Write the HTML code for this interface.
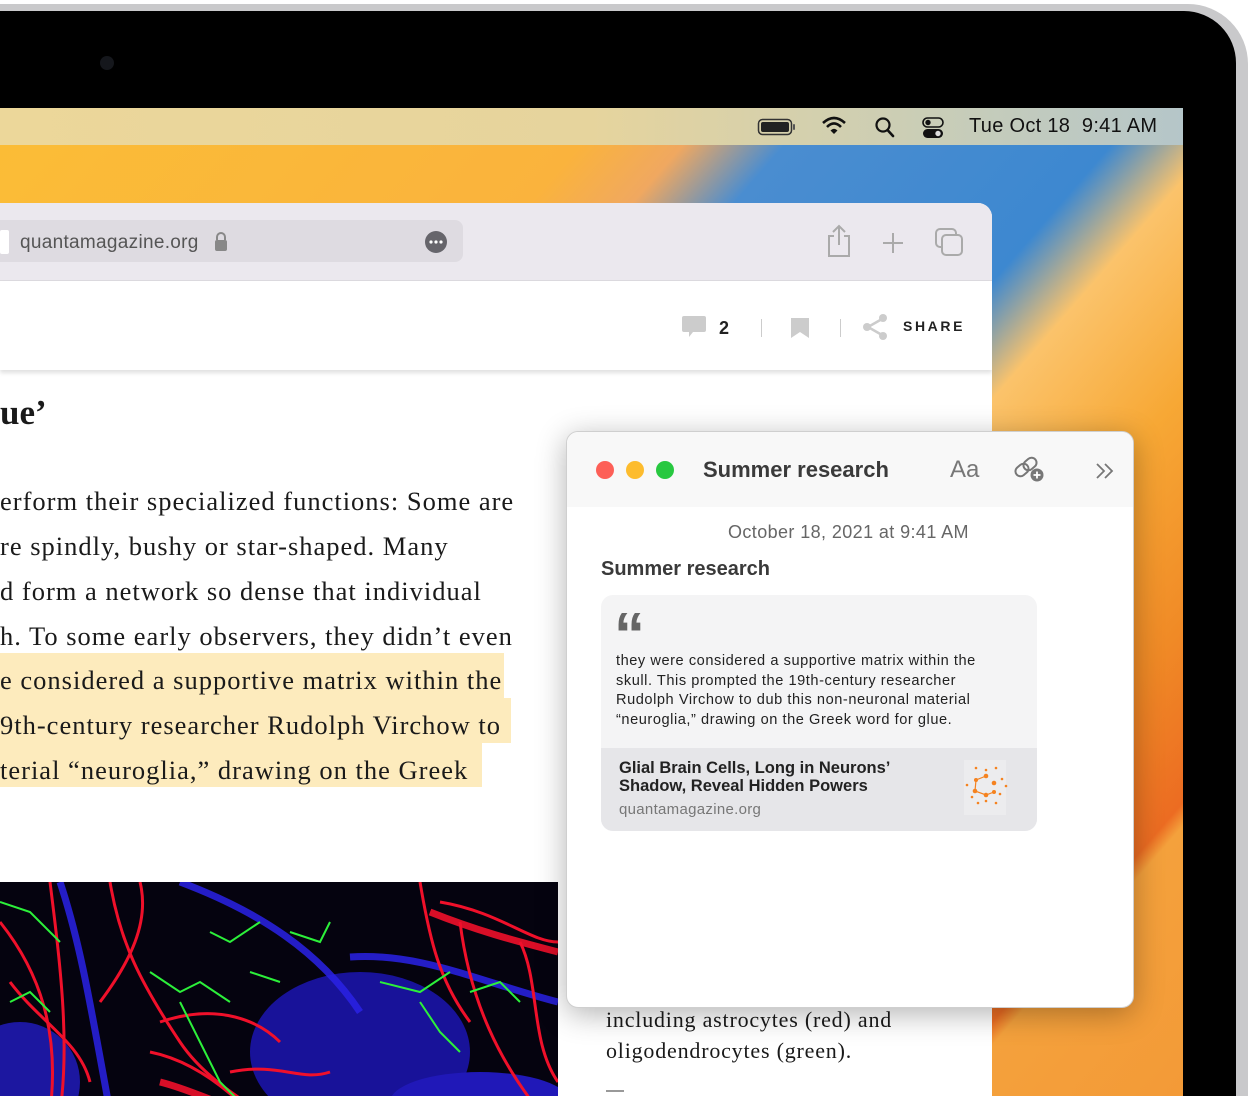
<!DOCTYPE html>
<html><head><meta charset="utf-8"><style>
*{margin:0;padding:0;box-sizing:border-box}
html,body{width:1252px;height:1096px;overflow:hidden}
body{background:#fff;position:relative;font-family:"Liberation Sans",sans-serif}
.abs{position:absolute}
#frame{left:0;top:4px;width:1248px;height:1092px;background:#c9c9cb;border-top-right-radius:60px}
#bezel{left:0;top:11px;width:1236px;height:1085px;background:#000;border-top-right-radius:52px}
#screen{left:0;top:108px;width:1183px;height:988px;overflow:hidden}
#wall{left:0;top:0;width:1183px;height:988px;
background:linear-gradient(131deg,#fbbd36 0%,#fab33d 30%,#f0a860 35%,#4a8dd0 40%,#3d88d0 56%,#fbc36b 61%,#f7a835 70%,#f08a26 80%,#ec6c22 87.5%,#f4a13c 88.5%,#f39a37 100%)}
#menubar{left:0;top:0;width:1183px;height:37px;background:linear-gradient(90deg,#ecd79a,#e6d49d 50%,#c8cdb8 80%,#b5c6c9);color:#111;font-size:20px}
#safari{left:0;top:95px;width:992px;height:893px;background:#fff;border-top-right-radius:14px;overflow:hidden}
#tool{left:0;top:0;width:992px;height:78px;background:#ebe8ee;border-bottom:1px solid #dcdadf}
#url{left:-10px;top:17px;width:473px;height:42px;background:#dedbe1;border-radius:8px}
#nav{left:0;top:78px;width:992px;height:89px;background:#fff;box-shadow:0 3px 4px rgba(0,0,0,.12)}
.serif{font-family:"Liberation Serif",serif;color:#1a1a1a}
.line{position:absolute;left:0;font-size:26.5px;letter-spacing:1px;white-space:nowrap;height:34px;line-height:34px}
.hl{background:#fdebbd}
#note{left:566px;top:431px;width:568px;height:577px;background:#fff;border-radius:12px;border:1px solid #cfcfcf;box-shadow:0 6px 30px rgba(0,0,0,.3);overflow:hidden}
</style></head><body>
<div id="frame" class="abs"></div>
<div id="bezel" class="abs"></div>
<div class="abs" style="left:100px;top:56px;width:14px;height:14px;border-radius:50%;background:#15171c"></div>
<div id="screen" class="abs">
 <div id="wall" class="abs"></div>
 <div id="menubar" class="abs">
  <svg class="abs" style="left:757px;top:9px" width="40" height="20"><rect x="1.5" y="2.5" width="33" height="15" rx="4" fill="none" stroke="#333" stroke-width="1.5"/><rect x="4" y="5" width="28" height="10" rx="2" fill="#222"/><rect x="36" y="7" width="2" height="6" rx="1" fill="#555"/></svg>
  <svg class="abs" style="left:821px;top:7px" width="26" height="22"><path d="M2 8 Q13 -2 24 8" fill="none" stroke="#111" stroke-width="2.6"/><path d="M6 12 Q13 5 20 12" fill="none" stroke="#111" stroke-width="2.6"/><path d="M9.5 15.5 L13 19 L16.5 15.5 Q13 12 9.5 15.5Z" fill="#111"/></svg>
  <svg class="abs" style="left:874px;top:9px" width="22" height="22"><circle cx="9" cy="8" r="6.5" fill="none" stroke="#111" stroke-width="2.2"/><path d="M13.5 13 L19 19" stroke="#111" stroke-width="2.6" stroke-linecap="round"/></svg>
  <svg class="abs" style="left:922px;top:9px" width="22" height="22"><rect x="1" y="1" width="20" height="9" rx="4.5" fill="none" stroke="#111" stroke-width="1.6"/><circle cx="6" cy="5.5" r="2.7" fill="#111"/><rect x="1" y="12" width="20" height="9" rx="4.5" fill="#111"/><circle cx="16" cy="16.5" r="2.7" fill="#ddd"/></svg>
  <div class="abs" style="left:969px;top:7px;white-space:nowrap;letter-spacing:.3px">Tue Oct 18&nbsp;&nbsp;9:41 AM</div>
 </div>
 <div id="safari" class="abs">
  <div id="tool" class="abs">
   <div id="url" class="abs"></div>
   <div class="abs" style="left:0;top:27px;width:9px;height:24px;background:#fff;border-radius:2px"></div>
   <div class="abs" style="left:20px;top:29px;font-size:19px;color:#555;letter-spacing:.3px">quantamagazine.org</div>
   <svg class="abs" style="left:213px;top:28px" width="16" height="22"><path d="M4 9 V6 a4 4 0 0 1 8 0 V9" fill="none" stroke="#888" stroke-width="2"/><rect x="2" y="9" width="12" height="11" rx="2" fill="#888"/></svg>
   <svg class="abs" style="left:424px;top:27px" width="24" height="24"><circle cx="12" cy="12" r="11" fill="#66656b"/><circle cx="7" cy="12" r="1.6" fill="#fff"/><circle cx="12" cy="12" r="1.6" fill="#fff"/><circle cx="17" cy="12" r="1.6" fill="#fff"/></svg>
   <svg class="abs" style="left:825px;top:20px" width="28" height="36"><path d="M9 13 H4 V33 H24 V13 H19" fill="none" stroke="#aaa" stroke-width="2"/><path d="M14 22 V3 M8 9 L14 3 L20 9" fill="none" stroke="#aaa" stroke-width="2"/></svg>
   <svg class="abs" style="left:881px;top:28px" width="24" height="24"><path d="M12 2 V22 M2 12 H22" stroke="#aaa" stroke-width="2"/></svg>
   <svg class="abs" style="left:934px;top:24px" width="30" height="30"><rect x="2" y="2" width="20" height="18" rx="4" fill="none" stroke="#aaa" stroke-width="2"/><rect x="8" y="8" width="20" height="20" rx="4" fill="#ebe8ee" stroke="#aaa" stroke-width="2"/></svg>
  </div>
  <div id="nav" class="abs">
   <svg class="abs" style="left:681px;top:34px" width="26" height="24"><path d="M3 1 H23 a2 2 0 0 1 2 2 V15 a2 2 0 0 1 -2 2 H12 L8 22 V17 H3 a2 2 0 0 1 -2 -2 V3 a2 2 0 0 1 2 -2Z" fill="#ccc"/></svg>
   <div class="abs" style="left:719px;top:37px;font-size:18px;font-weight:bold;color:#222">2</div>
   <div class="abs" style="left:761px;top:38px;width:1px;height:18px;background:#ccc"></div>
   <svg class="abs" style="left:790px;top:36px" width="20" height="22"><path d="M1 1 H19 V21 L10 15 L1 21Z" fill="#ccc"/></svg>
   <div class="abs" style="left:840px;top:38px;width:1px;height:18px;background:#ccc"></div>
   <svg class="abs" style="left:862px;top:32px" width="28" height="28"><path d="M20 6 L6 14 L20 22" fill="none" stroke="#ccc" stroke-width="2.5"/><circle cx="21" cy="5" r="4" fill="#ccc"/><circle cx="5" cy="14" r="4" fill="#ccc"/><circle cx="21" cy="23" r="4" fill="#ccc"/></svg>
   <div class="abs" style="left:903px;top:37px;font-size:14px;font-weight:bold;letter-spacing:2.6px;color:#222">SHARE</div>
  </div>
  <div class="abs serif" style="left:0;top:190px;font-size:35px;font-weight:bold">ue’</div>
  <div class="line serif" style="top:281px">erform their specialized functions: Some are</div>
  <div class="line serif" style="top:326px">re spindly, bushy or star-shaped. Many</div>
  <div class="line serif" style="top:371px">d form a network so dense that individual</div>
  <div class="line serif" style="top:416px">h. To some early observers, they didn’t even</div>
  <div class="abs hl" style="left:0;top:450px;width:504px;height:45px"></div>
  <div class="abs hl" style="left:0;top:495px;width:511px;height:45px"></div>
  <div class="abs hl" style="left:0;top:540px;width:482px;height:44px"></div>
  <div class="line serif" style="top:460px">e considered a supportive matrix within the</div>
  <div class="line serif" style="top:505px">9th-century researcher Rudolph Virchow to</div>
  <div class="line serif" style="top:550px">terial “neuroglia,” drawing on the Greek</div>
  <div class="line serif" style="left:606px;top:800px;font-size:22px;letter-spacing:.8px">including astrocytes (red) and</div>
  <div class="line serif" style="left:606px;top:831px;font-size:22px;letter-spacing:.8px">oligodendrocytes (green).</div>
  <div class="abs" style="left:606px;top:887px;width:18px;height:2px;background:#999"></div>
  <svg class="abs" style="left:0;top:679px" width="558" height="214">
   <rect width="558" height="230" fill="#05030f"/>
   <ellipse cx="360" cy="170" rx="110" ry="80" fill="#1b14a8" opacity=".9"/>
   <ellipse cx="20" cy="200" rx="60" ry="60" fill="#1c17a0"/>
   <ellipse cx="480" cy="220" rx="90" ry="30" fill="#2018b8"/>
   <g fill="none" stroke="#2a22e6" stroke-width="7" opacity=".85">
    <path d="M180 0 C260 30 320 70 360 130"/><path d="M350 75 C420 70 480 100 558 120"/><path d="M60 0 C80 60 90 120 110 230"/></g>
   <g fill="none" stroke="#f0102a" stroke-width="3">
    <path d="M0 40 C40 90 60 150 50 230"/><path d="M50 0 C60 80 70 160 60 230"/><path d="M110 0 C120 60 140 100 180 160 C200 190 230 210 260 230"/>
    <path d="M160 140 C220 120 260 140 280 160"/><path d="M150 170 C200 180 240 220 250 230"/><path d="M230 190 C280 180 300 200 330 190"/>
    <path d="M440 20 C500 30 530 60 558 60"/><path d="M460 40 C470 120 500 180 540 230"/><path d="M420 0 C430 60 440 100 470 140"/>
    <path d="M140 0 C150 40 130 80 100 120"/><path d="M10 100 C40 140 80 160 90 200"/><path d="M520 60 C540 100 530 160 558 200"/></g>
   <g fill="none" stroke="#f0102a" stroke-width="7" opacity=".9"><path d="M430 30 C480 50 520 60 558 70"/><path d="M160 200 C200 210 230 230 260 230"/></g>
   <g fill="none" stroke="#2cf03a" stroke-width="2">
    <path d="M150 90 L180 110 L200 100 L230 120"/><path d="M210 50 L230 60 L260 40"/><path d="M180 120 L200 160 L220 200 L240 220"/>
    <path d="M380 100 L420 110 L450 90"/><path d="M420 120 L440 150 L460 170"/><path d="M0 20 L30 30 L60 60"/><path d="M10 120 L30 110 L50 130"/>
    <path d="M290 50 L320 60 L330 40"/><path d="M470 110 L500 100 L520 120"/><path d="M250 90 L280 100"/></g>
  </svg>
 </div>
</div>
<div id="note" class="abs">
 <div class="abs" style="left:0;top:0;width:568px;height:75px;background:#f8f8f8"></div>
 <div class="abs" style="left:29px;top:29px;width:18px;height:18px;border-radius:50%;background:#fd5f57"></div>
 <div class="abs" style="left:59px;top:29px;width:18px;height:18px;border-radius:50%;background:#fdbc2e"></div>
 <div class="abs" style="left:89px;top:29px;width:18px;height:18px;border-radius:50%;background:#28c840"></div>
 <div class="abs" style="left:136px;top:25px;font-size:22px;font-weight:bold;color:#3a3a3a">Summer research</div>
 <div class="abs" style="left:383px;top:24px;font-size:24px;color:#777">Aa</div>
 <svg class="abs" style="left:446px;top:22px" width="34" height="30"><g fill="none" stroke="#777" stroke-width="2"><rect x="2" y="11" width="14" height="10" rx="5" transform="rotate(-40 9 16)"/><rect x="10" y="5" width="14" height="10" rx="5" transform="rotate(-40 17 10)"/></g><circle cx="24" cy="21" r="6.5" fill="#777"/><path d="M24 17.5 V24.5 M20.5 21 H27.5" stroke="#fff" stroke-width="1.8"/></svg>
 <svg class="abs" style="left:527px;top:30px" width="22" height="20"><path d="M3 2 L10 9 L3 16 M11 2 L18 9 L11 16" fill="none" stroke="#777" stroke-width="1.8"/></svg>
 <div class="abs" style="left:161px;top:90px;font-size:18px;color:#666;letter-spacing:.4px;white-space:nowrap">October 18, 2021 at 9:41 AM</div>
 <div class="abs" style="left:34px;top:126px;font-size:20px;font-weight:bold;color:#3a3a3a">Summer research</div>
 <div class="abs" style="left:34px;top:163px;width:436px;height:236px;background:#f4f4f5;border-radius:12px;overflow:hidden">
  <div class="abs" style="left:13px;top:10px;font-family:'Liberation Sans',sans-serif;font-size:62px;font-weight:bold;color:#666;line-height:62px;letter-spacing:-3px">“</div>
  <div class="abs" style="left:15px;top:57px;width:400px;font-size:14.6px;line-height:19.5px;color:#222;letter-spacing:.55px">they were considered a supportive matrix within the skull. This prompted the 19th-century researcher Rudolph Virchow to dub this non-neuronal material “neuroglia,” drawing on the Greek word for glue.</div>
  <div class="abs" style="left:0;top:153px;width:436px;height:83px;background:#e6e6e9"></div>
  <div class="abs" style="left:18px;top:164px;font-size:16.5px;font-weight:bold;line-height:18px;color:#222">Glial Brain Cells, Long in Neurons’<br>Shadow, Reveal Hidden Powers</div>
  <div class="abs" style="left:18px;top:206px;font-size:15px;color:#777;letter-spacing:.3px">quantamagazine.org</div>
  <div class="abs" style="left:363px;top:165px;width:42px;height:55px;background:#ececee"></div>
  <svg class="abs" style="left:363px;top:168px" width="56" height="50"><g fill="#f5821f"><circle cx="12" cy="5" r="1.3"/><circle cx="22" cy="7" r="1.3"/><circle cx="32" cy="5" r="1.3"/><circle cx="22" cy="13" r="2.3"/><circle cx="12" cy="17" r="2"/><circle cx="30" cy="20" r="2.3"/><circle cx="38" cy="16" r="1.3"/><circle cx="3" cy="22" r="1.3"/><circle cx="42" cy="23" r="1.3"/><circle cx="11" cy="28" r="2.3"/><circle cx="22" cy="32" r="2.3"/><circle cx="30" cy="29" r="2"/><circle cx="36" cy="31" r="1.3"/><circle cx="8" cy="34" r="1.3"/><circle cx="14" cy="40" r="1.3"/><circle cx="22" cy="38" r="1.3"/><circle cx="32" cy="40" r="1.3"/></g><path d="M22 13 L12 17 L11 28 L22 32 L30 29" fill="none" stroke="#f5821f" stroke-width="1.2"/></svg>
 </div>
</div>
</body></html>
